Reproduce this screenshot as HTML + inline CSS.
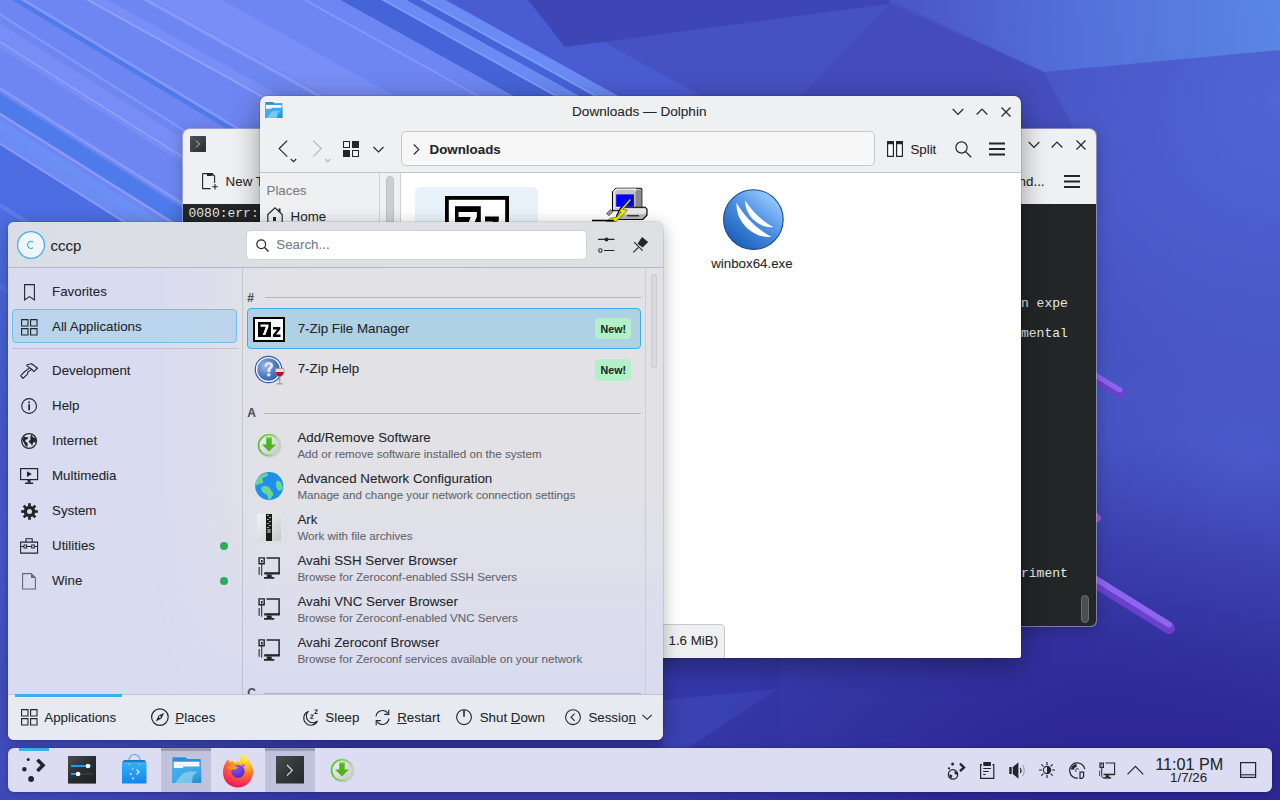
<!DOCTYPE html>
<html><head><meta charset="utf-8">
<style>
*{box-sizing:border-box;margin:0;padding:0}
html,body{width:1280px;height:800px;overflow:hidden}
body{position:relative;font-family:"Liberation Sans",sans-serif;color:#232629;font-size:13.33px;-webkit-text-stroke:0.08px currentColor;
background:#4a55c8;}
.abs{position:absolute}
#wall{position:absolute;left:0;top:0;width:1280px;height:800px;overflow:hidden;
background:
 linear-gradient(165deg,#7088f0 0%,#6a7eea 15%,#5464d8 35%,#4450c0 55%,#3a3cae 72%,#2e2696 100%);}
#streaks{position:absolute;left:0;top:0;width:1280px;height:800px;}
/* konsole */
#konsole{left:183px;top:129px;width:913px;height:497px;border-radius:7px 7px 5px 5px;background:#eff0f1;overflow:hidden;
 box-shadow:0 0 0 1px rgba(190,192,200,.55),0 4px 16px rgba(0,0,0,.25)}
#konsole .term{position:absolute;left:0;top:75px;width:913px;height:422px;background:#232627;}
.mono{font-family:"Liberation Mono",monospace;font-size:13px;color:#e8e8e8;white-space:pre;-webkit-text-stroke:0}
/* dolphin */
#dolphin{left:260px;top:96px;width:761px;height:562px;border-radius:7px 7px 3px 3px;background:#eff0f1;overflow:hidden;
 box-shadow:0 0 0 1px rgba(0,0,0,.10),0 6px 28px rgba(0,0,0,.38)}
/* kickoff */
#kick{left:8px;top:222px;width:655px;height:518px;border-radius:6px;overflow:hidden;background:#d9dcf0;
 box-shadow:0 0 0 1px rgba(0,0,0,.08),0 4px 18px rgba(0,0,0,.3)}
/* taskbar */
#panel{left:8px;top:748px;width:1264px;height:44px;border-radius:6px;background:rgba(220,221,243,1);
 box-shadow:0 0 0 1px rgba(0,0,0,.06),0 2px 8px rgba(0,0,0,.2)}
.t{position:absolute;white-space:nowrap;line-height:1}
svg{position:absolute;overflow:visible}
</style></head><body>
<div id="wall">
<svg id="streaks" width="1280" height="800" viewBox="0 0 1280 800"><defs><linearGradient id="wb" x1="0" y1="0" x2="0" y2="1"><stop offset="0" stop-color="#4650c4"/><stop offset=".45" stop-color="#3f47b8"/><stop offset=".8" stop-color="#3438a8"/><stop offset="1" stop-color="#3436a6"/></linearGradient><radialGradient id="bpr" cx="1150" cy="920" r="480" gradientUnits="userSpaceOnUse"><stop offset="0" stop-color="#2a2090" stop-opacity=".95"/><stop offset=".5" stop-color="#2c2392" stop-opacity=".7"/><stop offset="1" stop-color="#2c2490" stop-opacity="0"/></radialGradient><linearGradient id="mfg" x1="0" y1="0" x2="0" y2="800" gradientUnits="userSpaceOnUse"><stop offset="0" stop-color="#fff"/><stop offset=".3" stop-color="#fff"/><stop offset=".6" stop-color="#000"/></linearGradient><mask id="mfade" maskUnits="userSpaceOnUse" x="0" y="0" width="1280" height="800"><rect width="1280" height="800" fill="url(#mfg)"/></mask><clipPath id="lclip"><rect x="0" y="0" width="1000" height="800"/></clipPath><linearGradient id="brg" x1="900" y1="40" x2="1280" y2="0" gradientUnits="userSpaceOnUse"><stop offset="0" stop-color="#4a56c6"/><stop offset=".45" stop-color="#5370d8"/><stop offset="1" stop-color="#5a86e6"/></linearGradient><radialGradient id="lsp" cx="1240" cy="470" r="260" gradientUnits="userSpaceOnUse"><stop offset="0" stop-color="#4c5ccc" stop-opacity=".9"/><stop offset="1" stop-color="#4c5ccc" stop-opacity="0"/></radialGradient><linearGradient id="rg" x1="0" y1="60" x2="0" y2="800" gradientUnits="userSpaceOnUse"><stop offset="0" stop-color="#4752c2"/><stop offset=".2" stop-color="#4854c4"/><stop offset=".45" stop-color="#4250bc"/><stop offset=".7" stop-color="#3a40ae"/><stop offset="1" stop-color="#3436a6"/></linearGradient><radialGradient id="trl" cx="1280" cy="100" r="300" gradientUnits="userSpaceOnUse"><stop offset="0" stop-color="#5068d6" stop-opacity=".9"/><stop offset="1" stop-color="#5068d6" stop-opacity="0"/></radialGradient><radialGradient id="llt" cx="0" cy="520" r="420" gradientUnits="userSpaceOnUse"><stop offset="0" stop-color="#4a5cd0" stop-opacity="1"/><stop offset=".6" stop-color="#4656c8" stop-opacity=".7"/><stop offset="1" stop-color="#4452c4" stop-opacity="0"/></radialGradient><filter id="fb2"><feGaussianBlur stdDeviation="18"/></filter><filter id="sb"><feGaussianBlur stdDeviation="0.6"/></filter></defs><rect width="1280" height="800" fill="url(#wb)"/><rect x="0" y="0" width="700" height="800" fill="url(#llt)"/><g clip-path="url(#lclip)"><g mask="url(#mfade)"><polygon points="-1518.0,-10.0 323.0,-10.0 1818.5,820.0 -22.5,820.0" fill="#6e86f2" opacity="1.0"/><polygon points="323.0,-10.0 363.5,-10.0 1859.0,820.0 1818.5,820.0" fill="#4564d8" opacity="1.0"/><polygon points="363.5,-10.0 389.0,-10.0 1884.5,820.0 1859.0,820.0" fill="#6a8af4" opacity="1.0"/><polygon points="363.5,-10.0 367.0,-10.0 1862.5,820.0 1859.0,820.0" fill="#86a0fa" opacity="0.8"/><polygon points="389.0,-10.0 403.0,-10.0 1898.5,820.0 1884.5,820.0" fill="#4564d8" opacity="1.0"/><polygon points="403.0,-10.0 428.0,-10.0 1923.5,820.0 1898.5,820.0" fill="#6a8af4" opacity="1.0"/><polygon points="403.0,-10.0 406.5,-10.0 1902.0,820.0 1898.5,820.0" fill="#86a0fa" opacity="0.8"/><polygon points="428.0,-10.0 522.0,-10.0 2017.5,820.0 1923.5,820.0" fill="#4a5cd2" opacity="1.0"/><polygon points="285.0,-10.0 289.0,-10.0 1784.5,820.0 1780.5,820.0" fill="#a0b0ff" opacity="0.45"/><polygon points="134.0,-10.0 204.0,-10.0 1699.5,820.0 1629.5,820.0" fill="#8898fa" opacity="0.45"/><polygon points="125.0,-10.0 132.0,-10.0 1627.5,820.0 1620.5,820.0" fill="#a8b4ff" opacity="0.45"/><polygon points="68.0,-10.0 90.0,-10.0 1585.5,820.0 1563.5,820.0" fill="#8898fa" opacity="0.45"/><polygon points="68.0,-10.0 72.0,-10.0 1567.5,820.0 1563.5,820.0" fill="#a8b4ff" opacity="0.5"/><polygon points="-4.7,-10.0 4.3,-10.0 1387.7,820.0 1378.7,820.0" fill="#4a7ae8" opacity="0.9"/><polygon points="4.3,-10.0 9.3,-10.0 1392.7,820.0 1387.7,820.0" fill="#a0b0ff" opacity="0.45"/><polygon points="-40.9,-10.0 -36.9,-10.0 1280.6,820.0 1276.6,820.0" fill="#a8b4ff" opacity="0.4"/><polygon points="-91.9,-10.0 -52.9,-10.0 1264.6,820.0 1225.6,820.0" fill="#8898fa" opacity="0.4"/><polygon points="-83.9,-10.0 -80.9,-10.0 1236.6,820.0 1233.6,820.0" fill="#b0bcff" opacity="0.45"/><polygon points="-158.9,-10.0 -153.9,-10.0 1163.6,820.0 1158.6,820.0" fill="#a8b4ff" opacity="0.45"/><polygon points="-193.9,-10.0 -163.9,-10.0 1153.6,820.0 1123.6,820.0" fill="#4a7ae8" opacity="0.9"/><polygon points="-198.9,-10.0 -194.9,-10.0 1122.6,820.0 1118.6,820.0" fill="#a8b4ff" opacity="0.5"/><polygon points="-222.9,-10.0 -205.9,-10.0 1111.6,820.0 1094.6,820.0" fill="#6a90f4" opacity="0.9"/><polygon points="-241.9,-10.0 -222.9,-10.0 1094.6,820.0 1075.6,820.0" fill="#6a90f4" opacity="0.6"/><polygon points="-245.9,-10.0 -241.9,-10.0 1075.6,820.0 1071.6,820.0" fill="#a8b4ff" opacity="0.45"/><polygon points="-1515.9,-10.0 -245.9,-10.0 1071.6,820.0 -198.4,820.0" fill="#4c6ee2" opacity="1"/><polygon points="-345.9,-10.0 -337.9,-10.0 979.6,820.0 971.6,820.0" fill="#6a8af4" opacity="0.5"/><polygon points="-475.9,-10.0 -465.9,-10.0 851.6,820.0 841.6,820.0" fill="#6a8af4" opacity="0.4"/></g></g><polygon points="528,0 1280,0 1280,800 780,800 780,140" fill="url(#rg)"/><rect x="780" y="0" width="500" height="450" fill="url(#trl)"/><polygon points="528,0 889,0 889,4 565,47" fill="#3e46b6"/><polygon points="889,4 760,140 1080,140 1044,72" fill="#4248b6" opacity=".6"/><polygon points="889,0 1280,0 1280,50 1044,72" fill="url(#brg)"/><polygon points="663,700 778,689 688,748 663,748" fill="#3c44b4" opacity=".8"/><rect x="0" y="0" width="1280" height="800" fill="url(#lsp)"/><rect x="0" y="0" width="1280" height="800" fill="url(#bpr)"/><g stroke-linecap="round"><path d="M1060 357 L1120 393" stroke="#6a40cc" stroke-width="10"/><path d="M1060 354 L1120 390" stroke="#8c64ee" stroke-width="5"/><path d="M1060 560 L1169 628" stroke="#6a40cc" stroke-width="12"/><path d="M1060 556.5 L1169 624.5" stroke="#8d66f0" stroke-width="6"/><path d="M1090 513 L1097 518" stroke="#8a5ae0" stroke-width="8"/></g></svg>
</div>

<div id="konsole" class="abs">
 <svg style="left:7px;top:7px" width="16" height="16" viewBox="0 0 16 16"><defs><linearGradient id="kg" x1="0" y1="0" x2="1" y2="1"><stop offset="0" stop-color="#4d5356"/><stop offset="1" stop-color="#2a2e30"/></linearGradient></defs><rect width="16" height="16" rx="1" fill="url(#kg)"/><path d="M6 4.5l3.5 3.5-3.5 3.5" fill="none" stroke="#d6d8da" stroke-width="0.9"/></svg>
 <svg style="left:844.5px;top:12px" width="12" height="8" viewBox="0 0 12 8"><path d="M0.7 1l5.3 5.3 5.3-5.3" fill="none" stroke="#232629" stroke-width="1.2"/></svg>
 <svg style="left:868px;top:12px" width="12" height="8" viewBox="0 0 12 8"><path d="M0.7 6.5l5.3-5.3 5.3 5.3" fill="none" stroke="#232629" stroke-width="1.2"/></svg>
 <svg style="left:893px;top:10.5px" width="10" height="10" viewBox="0 0 10 10"><path d="M0.5 0.5l9 9M9.5 0.5l-9 9" fill="none" stroke="#232629" stroke-width="1.2"/></svg>
 <svg style="left:19px;top:44px" width="17" height="17" viewBox="0 0 17 17"><path d="M0.6 0.6h9.5l2.5 2.5v7M0.6 0.6v15h8" fill="none" stroke="#232629" stroke-width="1.1"/><rect x="5" y="0" width="5.5" height="3" fill="#232629"/><path d="M13 11v5.5M10.2 13.8h5.6" stroke="#232629" stroke-width="1.1"/></svg>
 <div class="t" style="left:42.6px;top:45.7px">New Tab</div>
 <div class="t" style="left:824.5px;top:45.7px">Find...</div>
 <svg style="left:880.5px;top:46px" width="16" height="13" viewBox="0 0 16 13"><path d="M0 1h16M0 6.5h16M0 12h16" stroke="#232629" stroke-width="1.9"/></svg>
 <div class="term">
  <div class="t mono" style="left:5.5px;top:3px">0080:err:</div>
  <div class="t mono" style="left:799px;top:92.8px">option expe</div>
  <div class="t mono" style="left:799px;top:122.7px">xperimental</div>
  <div class="t mono" style="left:806.8px;top:362.5px">experiment</div>
  <div class="abs" style="left:897.8px;top:390.9px;width:8.4px;height:28px;border-radius:4.2px;background:#4b4e51;border:1px solid #6b6e71"></div>
 </div>
</div>
<div id="dolphin" class="abs">
 <div class="t" style="left:312px;top:8.5px;font-size:13.6px">Downloads — Dolphin</div>
 <svg style="left:5px;top:6.3px" width="18" height="16.5" viewBox="0 0 30 27" preserveAspectRatio="none"><defs><linearGradient id="dfg2" x1="0" y1="0" x2="1" y2="1"><stop offset="0" stop-color="#48b4ec"/><stop offset=".6" stop-color="#3aa6e4"/><stop offset="1" stop-color="#2a86c8"/></linearGradient></defs><path d="M.5 .2h13l1.8 1.8h13.4v24h-28.2z" fill="#2b90d6"/><rect x="1.7" y="4.7" width="25.8" height="6.5" fill="#f6f6f6"/><path d="M0 11.4h10.6l.8-2h17.9v16.7h-29.3z" fill="url(#dfg2)"/><path d="M3.5 26.1C7 19.5 11 15.5 17 14.5c3-.5 6 0 8.3.2-1 1.5-2.8 2.5-4.2 3.6-.6 2.6-1.2 5.2-1 7.8z" fill="#8fd2f0" opacity=".75"/></svg>
 <svg style="left:692px;top:12px" width="12" height="8" viewBox="0 0 12 8"><path d="M0.7 1l5.3 5.3 5.3-5.3" fill="none" stroke="#232629" stroke-width="1.2"/></svg>
 <svg style="left:716px;top:12px" width="12" height="8" viewBox="0 0 12 8"><path d="M0.7 6.5l5.3-5.3 5.3 5.3" fill="none" stroke="#232629" stroke-width="1.2"/></svg>
 <svg style="left:741px;top:10.5px" width="10" height="10" viewBox="0 0 10 10"><path d="M0.5 0.5l9 9M9.5 0.5l-9 9" fill="none" stroke="#232629" stroke-width="1.2"/></svg>
 <!-- toolbar -->
 <svg style="left:18px;top:44px" width="20" height="24" viewBox="0 0 20 24"><path d="M9.2 0.6l-8 8 8 8" fill="none" stroke="#232629" stroke-width="1.2"/><path d="M12.8 19l2.7 2.7 2.7-2.7" fill="none" stroke="#232629" stroke-width="1.1"/></svg>
 <svg style="left:52px;top:44px" width="20" height="24" viewBox="0 0 20 24"><path d="M1.2 0.6l8 8-8 8" fill="none" stroke="#b4b6b8" stroke-width="1.2"/><path d="M13 19l2.7 2.7 2.7-2.7" fill="none" stroke="#b4b6b8" stroke-width="1.1"/></svg>
 <svg style="left:83px;top:45px" width="16" height="16" viewBox="0 0 16 16"><rect x="0.5" y="0.5" width="6" height="6" fill="none" stroke="#232629"/><rect x="9" y="0" width="7" height="7" fill="#232629"/><rect x="0" y="9" width="7" height="7" fill="#232629"/><rect x="9.5" y="9.5" width="6" height="6" fill="none" stroke="#232629"/></svg>
 <svg style="left:113px;top:50px" width="11" height="7" viewBox="0 0 11 7"><path d="M0.5 1l5 5 5-5" fill="none" stroke="#232629" stroke-width="1.1"/></svg>
 <div class="abs" style="left:141px;top:35px;width:474px;height:35px;border-radius:5px;background:#f7f7f8;border:1px solid #c8c9cc"></div>
 <svg style="left:153px;top:48px" width="7" height="11" viewBox="0 0 7 11"><path d="M0.8 0.5l5 5-5 5" fill="none" stroke="#232629" stroke-width="1.1"/></svg>
 <div class="t" style="left:169.6px;top:46.7px;font-weight:bold">Downloads</div>
 <svg style="left:627px;top:45px" width="16" height="16" viewBox="0 0 16 16"><path d="M0 0h7v16h-7zM9 0h7v16h-7z" fill="#232629"/><path d="M1.2 3.2h4.6v11.6h-4.6zM10.2 3.2h4.6v11.6h-4.6z" fill="#fff"/></svg>
 <div class="t" style="left:650.4px;top:46.7px">Split</div>
 <svg style="left:695px;top:45px" width="17" height="17" viewBox="0 0 17 17"><circle cx="6.5" cy="6.5" r="5.6" fill="none" stroke="#232629" stroke-width="1.2"/><path d="M10.6 10.6l5.6 5.6" stroke="#232629" stroke-width="1.3"/></svg>
 <svg style="left:729px;top:46px" width="16" height="14" viewBox="0 0 16 14"><path d="M0 1.5h16M0 7h16M0 12.5h16" stroke="#232629" stroke-width="1.9"/></svg>
 <div class="abs" style="left:0;top:76px;width:761px;height:1px;background:#c4c5c8"></div>
 <!-- sidebar -->
 <div class="abs" style="left:119px;top:77px;width:1px;height:490px;background:#cfd0d2"></div>
 <div class="abs" style="left:126px;top:79.5px;width:8px;height:200px;border-radius:4px;background:#cdcecf;border:1px solid #bfc0c2"></div>
 <div class="t" style="left:6.5px;top:87.7px;color:#7b7c7e">Places</div>
 <svg style="left:7px;top:111px" width="16" height="16" viewBox="0 0 16 16"><path d="M0.8 7.5L8 0.8l7.2 6.7v8.2h-14.4z" fill="none" stroke="#232629" stroke-width="1.2"/><rect x="6" y="10" width="3" height="4" fill="#232629"/><rect x="11.5" y="1.5" width="2" height="3.5" fill="#232629"/></svg>
 <div class="t" style="left:30.6px;top:113.7px">Home</div>
 <!-- content -->
 <div class="abs" style="left:140px;top:77px;width:621px;height:485px;background:#fff;border-left:1px solid #d0d1d3"></div>
 <div class="abs" style="left:155px;top:91px;width:123px;height:150px;border-radius:5px;background:#e9f2fa"></div>
 <svg style="left:185px;top:99.6px" width="64" height="50" viewBox="0 0 64 50"><rect x="1.9" y="1.9" width="60.2" height="48" fill="#fff" stroke="#000" stroke-width="3.8"/><rect x="10" y="10.2" width="25.8" height="40" fill="#000"/><path d="M13.5 16h18.4v4.5l-7 18h-6l6.8-17.5h-12.2z" fill="#fff"/><path d="M40 20.4h13.8v4.6l-8 9.5h8.2v5h-14v-4.6l8-9.5h-8z" fill="#000"/></svg>
 <svg style="left:343px;top:91px" width="46" height="34" viewBox="0 0 46 34"><path d="M9.5 5L13 1.2h25l.8 1v21.5h-29.3z" fill="#c4c4c4" stroke="#000" stroke-width="1.1"/><path d="M32.5 3h6v20.5h-6z" fill="#8a8a8a"/><path d="M11 22V4.5l2.5-2.3h19v2" fill="none" stroke="#f4f4f4" stroke-width="1.3"/><rect x="13.2" y="7.4" width="17.7" height="12.3" fill="#0000f4"/><path d="M12.5 20.5h19.5" stroke="#f0f0f0" stroke-width="1.2"/><path d="M18 20.3h24.2l1.8 1.9v6l-4.2 4.3h-26v-4.3z" fill="#b8b8b8" stroke="#000" stroke-width="1.1"/><path d="M18.5 21.5h24.5v3.8l-2 2h-23z" fill="#e8e8e8"/><path d="M24 28.8h12" stroke="#3a3a3a" stroke-width="1.6"/><path d="M27 11.8l1.2 1.1-8.2 9.5 4.4.8-11.2 11.3h-10l4-3.3 6.5-1.2 4.5-4.8-2.3-.6z" fill="#f4ee00" stroke="#1a1a1a" stroke-width=".5"/><path d="M3.5 26.5l4-4 2.5 2.2-4 4z" fill="#9a9a9a" stroke="#222" stroke-width=".6"/><path d="M-11 33.5h22" stroke="#000" stroke-width="1.4"/></svg>
 <svg style="left:458px;top:88px" width="70" height="70" viewBox="0 0 70 70"><defs><linearGradient id="wbg" x1=".8" y1=".15" x2=".2" y2=".9"><stop offset="0" stop-color="#8ec4ff"/><stop offset=".45" stop-color="#4c8ee0"/><stop offset="1" stop-color="#1c62bc"/></linearGradient></defs><circle cx="35.4" cy="35.6" r="29.8" fill="url(#wbg)" stroke="#1a4a8e" stroke-width="1.1"/><path d="M18.4 18.8A33 33 0 0 0 53.4 52.9 90 90 0 0 1 18.4 18.8z" fill="#fff"/><path d="M27.1 16.2A27 27 0 0 0 55.5 43.3 80 80 0 0 1 27.1 16.2z" fill="#fff"/></svg>
 <div class="t" style="left:451.2px;top:160.7px">winbox64.exe</div>
 <div class="abs" style="left:141px;top:528.4px;width:324px;height:40px;border-radius:4px;background:#eff0f1;border:1px solid #c8c9cb"></div>
 <div class="t" style="left:408.5px;top:538.3px">1.6 MiB)</div>
</div>
<div id="kick" class="abs">
<div class="abs" style="left:0;top:0;width:655px;height:45px;background:linear-gradient(to right,#dbdde6 0%,#dddee4 40%,#dfe0e3 100%)"></div>
<div class="abs" style="left:150px;top:46px;width:505px;height:426px;background:linear-gradient(to bottom,#e1e1e6 0%,#e1e1e6 52%,rgba(225,225,230,0) 100%);-webkit-mask-image:linear-gradient(to right,transparent 0,#000 110px)"></div>
<div class="abs" style="left:0;top:45px;width:655px;height:1px;background:rgba(150,152,160,.55)"></div>
<svg style="left:9px;top:9px" width="28" height="28" viewBox="0 0 28 28"><circle cx="14" cy="14" r="13.4" fill="#eff6fa" stroke="#3daee9" stroke-width="1.2"/><path d="M16.2 11.2a3.3 3.6 0 1 0 0 5.4" fill="none" stroke="#3daee9" stroke-width="1.1"/></svg>
<div class="t" style="left:42.6px;top:16.05px;font-size:15px;">cccp</div>
<div class="abs" style="left:238.9px;top:8.75px;width:339px;height:28.4px;border-radius:4px;background:#fff;box-shadow:0 0 0 1px rgba(0,0,0,.06)"></div>
<svg style="left:247.5px;top:17px" width="13" height="13" viewBox="0 0 13 13"><circle cx="5.2" cy="5.2" r="4.4" fill="none" stroke="#232629" stroke-width="1.2"/><path d="M8.3 8.3l4.2 4.2" stroke="#232629" stroke-width="1.3"/></svg>
<div class="t" style="left:268.25px;top:16.46px;font-size:13.33px;color:#707d8a">Search...</div>
<svg style="left:590px;top:15px" width="17" height="16" viewBox="0 0 17 16"><path d="M0 2.4h16.5M6 13.5h10.5" stroke="#232629" stroke-width="1.1"/><circle cx="8.5" cy="2.4" r="2" fill="#232629"/><circle cx="2.4" cy="13.5" r="1.7" fill="#fff" stroke="#232629" stroke-width="1.1"/></svg>
<svg style="left:625px;top:15px" width="16" height="16" viewBox="0 0 16 16"><path d="M9 0l6.2 5-5.6 5.6-5-3.9z" fill="#232629"/><path d="M1.2 5.2l8.4 8.4" stroke="#232629" stroke-width="1.1"/><path d="M.3 15.3l5-4.8" stroke="#232629" stroke-width="1.1"/></svg>
<div class="abs" style="left:234px;top:46px;width:1px;height:426px;background:rgba(150,152,165,.35)"></div>
<div class="abs" style="left:637px;top:46px;width:1px;height:426px;background:rgba(150,152,165,.25)"></div>
<div class="abs" style="left:643px;top:52px;width:6px;height:94px;border-radius:3px;background:rgba(215,216,220,.8);border:1px solid rgba(170,172,178,.3)"></div>
<div class="abs" style="left:4.2px;top:87.2px;width:225.3px;height:34.1px;border-radius:4px;background:rgba(176,210,236,.75);border:1px solid #72c0ea"></div>
<div class="abs" style="left:4px;top:126px;width:226px;height:1px;background:rgba(150,152,165,.4)"></div>
<div class="t" style="left:44px;top:62.61px;font-size:13.33px;">Favorites</div>
<div class="t" style="left:44px;top:97.61px;font-size:13.33px;">All Applications</div>
<div class="t" style="left:44px;top:142.11px;font-size:13.33px;">Development</div>
<div class="t" style="left:44px;top:177.11px;font-size:13.33px;">Help</div>
<div class="t" style="left:44px;top:212.11px;font-size:13.33px;">Internet</div>
<div class="t" style="left:44px;top:247.11px;font-size:13.33px;">Multimedia</div>
<div class="t" style="left:44px;top:282.11px;font-size:13.33px;">System</div>
<div class="t" style="left:44px;top:317.11px;font-size:13.33px;">Utilities</div>
<div class="t" style="left:44px;top:352.11px;font-size:13.33px;">Wine</div>
<svg style="left:15.5px;top:62px" width="12" height="17" viewBox="0 0 12 17"><path d="M0.6 0.6h9.8v15.4l-4.9-3.4-4.9 3.4z" fill="none" stroke="#232629" stroke-width="1.1"/></svg>
<svg style="left:12.5px;top:96.5px" width="17" height="17" viewBox="0 0 17 17"><path d="M0.6 0.6h6.4v6.4h-6.4zM9.6 0.6h6.4v6.4h-6.4zM0.6 9.6h6.4v6.4h-6.4zM9.6 9.6h6.4v6.4h-6.4z" fill="none" stroke="#232629" stroke-width="1.1"/></svg>
<svg style="left:12px;top:140.5px" width="19" height="17" viewBox="0 0 19 17"><path d="M7.2 1.8L11.6 0.7 17.6 5.25 13.7 8.7 11.9 6.2 6.7 2.65z" fill="none" stroke="#232629" stroke-width="1.1" stroke-linejoin="round"/><path d="M9.65 4.9L4.8 8.5 0.7 12.6 2.9 15.4 7.5 11.1 7.7 9.15 11.9 6.2" fill="none" stroke="#232629" stroke-width="1.1" stroke-linejoin="round"/></svg>
<svg style="left:12.9px;top:175.75px" width="17" height="17" viewBox="0 0 17 17"><circle cx="8.1" cy="8" r="7.4" fill="none" stroke="#232629" stroke-width="1.1"/><rect x="7.3" y="6.2" width="1.7" height="6" fill="#232629"/><rect x="7.3" y="3.5" width="1.7" height="1.7" fill="#232629"/></svg>
<svg style="left:12.9px;top:211px" width="17" height="17" viewBox="0 0 17 17"><circle cx="8.1" cy="8" r="7.4" fill="none" stroke="#232629" stroke-width="1.3"/><path d="M3 3.5c1.5 0.3 2.3 1 3.5 0.8 1-0.2 1 1.2 0.2 1.6-1 0.5-2.2 0.2-2.5 1.5-0.3 1.2 1.5 1.5 2.3 2.6 0.6 0.9 0.2 2.8-0.5 3.9-1.2-0.6-1.8-2-2.6-3.2C2.5 9.5 1.8 8 1.5 6.8z" fill="#232629"/><path d="M10.5 1.5c1 1 0.5 2 1.5 2.7s2.3 0.3 2.8 1.5c0.5 1.3-0.3 2.6 0.2 3.8-1 0.3-2-0.6-2.8 0.2-0.8 0.9-0.3 2.2-1 3.3-0.6-0.8-0.8-2-1.6-2.6-0.6-0.5-1.6-0.3-1.8-1.3-0.2-1 0.8-1.6 1.5-2C10 6.5 9 5.5 9.3 4.3 9.5 3.3 10 2.4 10.5 1.5z" fill="#232629"/></svg>
<svg style="left:12px;top:245.5px" width="19" height="17" viewBox="0 0 19 17"><rect x="0.6" y="0.6" width="17" height="11" fill="none" stroke="#232629" stroke-width="1.2"/><path d="M7 3.2v5.8l4.8-2.9z" fill="#232629"/><rect x="7.6" y="11.6" width="3" height="3" fill="#232629"/><rect x="5" y="14.5" width="8.2" height="1.5" fill="#232629"/></svg>
<svg style="left:12.5px;top:280.5px" width="17" height="17" viewBox="0 0 17 17"><defs><mask id="gm"><rect width="17" height="17" fill="#fff"/><circle cx="8.5" cy="8.5" r="2.5" fill="#000"/></mask></defs><g mask="url(#gm)"><circle cx="8.5" cy="8.5" r="5.8" fill="#232629"/><rect x="7.15" y="0.1999999999999993" width="2.7" height="4" transform="rotate(0 8.5 8.5)" fill="#232629"/><rect x="7.15" y="0.1999999999999993" width="2.7" height="4" transform="rotate(45 8.5 8.5)" fill="#232629"/><rect x="7.15" y="0.1999999999999993" width="2.7" height="4" transform="rotate(90 8.5 8.5)" fill="#232629"/><rect x="7.15" y="0.1999999999999993" width="2.7" height="4" transform="rotate(135 8.5 8.5)" fill="#232629"/><rect x="7.15" y="0.1999999999999993" width="2.7" height="4" transform="rotate(180 8.5 8.5)" fill="#232629"/><rect x="7.15" y="0.1999999999999993" width="2.7" height="4" transform="rotate(225 8.5 8.5)" fill="#232629"/><rect x="7.15" y="0.1999999999999993" width="2.7" height="4" transform="rotate(270 8.5 8.5)" fill="#232629"/><rect x="7.15" y="0.1999999999999993" width="2.7" height="4" transform="rotate(315 8.5 8.5)" fill="#232629"/></g></svg>
<svg style="left:12px;top:315.5px" width="19" height="16" viewBox="0 0 19 16"><path d="M0.6 4.1h17v11h-17zM6 4V0.8h6.2V4" fill="none" stroke="#232629" stroke-width="1.1"/><path d="M0.6 8.5h17" stroke="#232629" stroke-width="1.1"/><rect x="4" y="7" width="2.6" height="3" fill="#dfe1f2" stroke="#232629" stroke-width="1"/><rect x="11.7" y="7" width="2.6" height="3" fill="#dfe1f2" stroke="#232629" stroke-width="1"/></svg>
<svg style="left:14px;top:351px" width="15" height="17" viewBox="0 0 15 17"><path d="M0.6 0.6h8.6l4.2 4.2v11.2h-12.8z" fill="none" stroke="#5f6a75" stroke-width="1.1"/><path d="M9 0.6v4.4h4.4" fill="#5f6a75"/></svg>
<div class="abs" style="left:212px;top:319.8px;width:8px;height:8px;border-radius:4px;background:#27ae60"></div>
<div class="abs" style="left:212px;top:354.9px;width:8px;height:8px;border-radius:4px;background:#27ae60"></div>
<div class="t" style="left:239.2px;top:69.54px;font-size:12px;font-weight:bold;color:#4d4f55">#</div>
<div class="abs" style="left:257px;top:75px;width:376px;height:1px;background:rgba(140,142,150,.5)"></div>
<div class="abs" style="left:239.2px;top:86.2px;width:393.8px;height:40.6px;border-radius:4px;background:rgba(170,207,228,.92);border:1px solid #3daee9"></div>
<svg style="left:245px;top:94.8px" width="32" height="25" viewBox="0 0 32 25"><rect x="1" y="1" width="30" height="23" fill="#fff" stroke="#000" stroke-width="2"/><rect x="5" y="5" width="13" height="15" fill="#000"/><path d="M7.5 7.5h8v2.2l-3.2 8.3h-2.6l3.1-8.2h-5.3z" fill="#fff"/><path d="M20 10h7.3v2.2l-4.3 5.3h4.5v2.5h-7.6v-2.2l4.3-5.3h-4.2z" fill="#000"/></svg>
<div class="t" style="left:289.7px;top:99.51px;font-size:13.33px;">7-Zip File Manager</div>
<div class="abs" style="left:587px;top:96.3px;width:35.7px;height:21.2px;border-radius:4px;background:#b2f0c8"></div><div class="t" style="left:592.5px;top:101.6px;font-size:10.7px;font-weight:bold;color:#1c2a22">New!</div>
<svg style="left:245.5px;top:132.5px" width="32" height="32" viewBox="0 0 32 32"><defs><radialGradient id="hg" cx=".35" cy=".35" r=".8"><stop offset="0" stop-color="#9cb8e0"/><stop offset=".6" stop-color="#4a78c0"/><stop offset="1" stop-color="#2c5aa6"/></radialGradient></defs><circle cx="14.5" cy="14.5" r="13.8" fill="#2a5aa8"/><circle cx="14.5" cy="14.5" r="12.6" fill="#fff"/><circle cx="14.5" cy="14.5" r="11.2" fill="url(#hg)"/><path d="M10.5 11.5c0-3 2-4.5 4.3-4.5 2.6 0 4.3 1.6 4.3 3.8 0 2.5-2.8 3-2.8 5.3v0.8h-3v-1.2c0-3 2.6-3.3 2.6-4.9 0-0.9-0.6-1.5-1.2-1.5-0.8 0-1.3 0.7-1.3 2.2z" fill="#e8e8e8"/><rect x="13.3" y="18.3" width="3" height="3" fill="#e8e8e8"/><path d="M21.5 13.5h8.4c0.5 3 0.5 7-4.2 8.2-4.7-1.2-4.7-5.2-4.2-8.2z" fill="#e0e0e0" stroke="#888" stroke-width=".6"/><path d="M21.6 17h8.2c-0.3 2.5-1.6 4-4.1 4.6-2.5-0.6-3.8-2.1-4.1-4.6z" fill="#c0101e"/><path d="M25.7 21.8v6M22.8 29.2c1-0.9 4.8-0.9 5.8 0" stroke="#999" stroke-width="1.2" fill="none"/></svg>
<div class="t" style="left:289.7px;top:140.41px;font-size:13.33px;">7-Zip Help</div>
<div class="abs" style="left:587px;top:137.4px;width:35.7px;height:21.2px;border-radius:4px;background:#b2f0c8"></div><div class="t" style="left:592.5px;top:142.7px;font-size:10.7px;font-weight:bold;color:#1c2a22">New!</div>
<div class="t" style="left:239.3px;top:185.34px;font-size:12px;font-weight:bold;color:#4d4f55">A</div>
<div class="abs" style="left:256px;top:191px;width:377px;height:1px;background:rgba(140,142,150,.5)"></div>
<div class="t" style="left:289.4px;top:208.71px;font-size:13.33px;">Add/Remove Software</div>
<div class="t" style="left:289.4px;top:225.98px;font-size:11.6px;color:#616469">Add or remove software installed on the system</div>
<div class="t" style="left:289.4px;top:249.71px;font-size:13.33px;">Advanced Network Configuration</div>
<div class="t" style="left:289.4px;top:266.98px;font-size:11.6px;color:#616469">Manage and change your network connection settings</div>
<div class="t" style="left:289.4px;top:290.71px;font-size:13.33px;">Ark</div>
<div class="t" style="left:289.4px;top:307.98px;font-size:11.6px;color:#616469">Work with file archives</div>
<div class="t" style="left:289.4px;top:331.71px;font-size:13.33px;">Avahi SSH Server Browser</div>
<div class="t" style="left:289.4px;top:348.98px;font-size:11.6px;color:#616469">Browse for Zeroconf-enabled SSH Servers</div>
<div class="t" style="left:289.4px;top:372.71px;font-size:13.33px;">Avahi VNC Server Browser</div>
<div class="t" style="left:289.4px;top:389.98px;font-size:11.6px;color:#616469">Browse for Zeroconf-enabled VNC Servers</div>
<div class="t" style="left:289.4px;top:413.71px;font-size:13.33px;">Avahi Zeroconf Browser</div>
<div class="t" style="left:289.4px;top:430.98px;font-size:11.6px;color:#616469">Browse for Zeroconf services available on your network</div>
<svg style="left:249px;top:210.8px" width="25" height="25" viewBox="0 0 25 25"><defs><linearGradient id="gdf" x1="0" y1="0" x2="1" y2="1"><stop offset="0" stop-color="#f2f2f2"/><stop offset="1" stop-color="#c8c8cc"/></linearGradient><linearGradient id="gdr" x1="0" y1="0" x2="1" y2=".3"><stop offset="0" stop-color="#4cc21e"/><stop offset=".6" stop-color="#7ad04a"/><stop offset="1" stop-color="#c8d0c0"/></linearGradient></defs><circle cx="12.5" cy="12.6" r="11.8" fill="#bdbdc2" opacity=".6"/><circle cx="12" cy="12.2" r="11" fill="url(#gdf)"/><circle cx="12" cy="12.2" r="10.4" fill="none" stroke="url(#gdr)" stroke-width="1.6"/><path d="M9.3 4.6h5.4v6.8h4.2l-6.9 7.1-6.9-7.1h4.2z" fill="#4ab51c"/><path d="M9.3 4.6h5.4v1.5h-5.4z" fill="#72cc44"/></svg>
<svg style="left:246.75px;top:249.8px" width="29" height="29" viewBox="0 0 29 29"><defs><clipPath id="glc"><circle cx="14.25" cy="14.1" r="14.1"/></clipPath></defs><circle cx="14.25" cy="14.1" r="14.1" fill="#1e90ea"/><g clip-path="url(#glc)" fill="#6ed492"><path d="M1 9c2-4 6-7 11-8 1.5 1.2.8 3-1 3.8-1.5.7-3.2.3-3.8 1.8-.5 1.3 1.5 2.2 1 3.6-.6 1.5-3 1.3-4.5 1.8-1.4.5-2.2 1.5-3.5 2.3z"/><path d="M7 14.5c2.3-1 5-.6 7 .8 1.8 1.3 1.8 3.8 3.5 4.9 1.4 1 .8 3-.3 4.1-1 1.2-1.2 3-2.6 3.9-1.8-1.6-1.8-4-3.2-5.6-1.5-1.6-4-1.6-4.8-3.8-.4-1.6-.4-3.4.4-4.3z"/><path d="M22.5 8.5c2.5.2 4.6 3 5.2 6 .4 2-.9 4-2.8 4.3-2 .2-2.9-2-3.5-3.8-.6-1.8-.8-5.1 1.1-6.5z"/></g></svg>
<svg style="left:249px;top:291.5px" width="24" height="28" viewBox="0 0 24 28"><defs><linearGradient id="ag" x1="0" y1="0" x2="1" y2="1"><stop offset="0" stop-color="#f4f4f4"/><stop offset="1" stop-color="#c8cacc"/></linearGradient></defs><rect x="0" y="0" width="24" height="27" fill="url(#ag)"/><rect x="9" y="0" width="6" height="27" fill="#1a1a1a"/><path d="M10 1.5h2M12 3.5h2M10 5.5h2M12 7.5h2M10 9.5h2M12 11.5h2M10 13.5h2" stroke="#aaa" stroke-width="1"/><rect x="10.3" y="15" width="3.4" height="4" fill="#888"/></svg>
<svg style="left:249.8px;top:335px" width="23" height="22" viewBox="0 0 23 22"><path d="M1.1 0.85h5.1v5.95h-5.1z" fill="none" stroke="#232629" stroke-width="1.4"/><path d="M3 2.9h1.6v2.6h-1.6z" fill="#232629"/><path d="M3.7 7.2v11.5" stroke="#232629" stroke-width="1"/><path d="M1.2 10v7.7" stroke="#56585c" stroke-width="1.5"/><path d="M8.45 0.9h12.65v15" fill="none" stroke="#232629" stroke-width="1.5"/><path d="M6.2 15.2h15.7v2.3h-15.7z" fill="#232629"/><path d="M8.8 17.4h4.9v2.8h-4.9z" fill="#232629"/><path d="M6 20.1h10.3v1.75h-10.3z" fill="#232629"/></svg>
<svg style="left:249.8px;top:376px" width="23" height="22" viewBox="0 0 23 22"><path d="M1.1 0.85h5.1v5.95h-5.1z" fill="none" stroke="#232629" stroke-width="1.4"/><path d="M3 2.9h1.6v2.6h-1.6z" fill="#232629"/><path d="M3.7 7.2v11.5" stroke="#232629" stroke-width="1"/><path d="M1.2 10v7.7" stroke="#56585c" stroke-width="1.5"/><path d="M8.45 0.9h12.65v15" fill="none" stroke="#232629" stroke-width="1.5"/><path d="M6.2 15.2h15.7v2.3h-15.7z" fill="#232629"/><path d="M8.8 17.4h4.9v2.8h-4.9z" fill="#232629"/><path d="M6 20.1h10.3v1.75h-10.3z" fill="#232629"/></svg>
<svg style="left:249.8px;top:417px" width="23" height="22" viewBox="0 0 23 22"><path d="M1.1 0.85h5.1v5.95h-5.1z" fill="none" stroke="#232629" stroke-width="1.4"/><path d="M3 2.9h1.6v2.6h-1.6z" fill="#232629"/><path d="M3.7 7.2v11.5" stroke="#232629" stroke-width="1"/><path d="M1.2 10v7.7" stroke="#56585c" stroke-width="1.5"/><path d="M8.45 0.9h12.65v15" fill="none" stroke="#232629" stroke-width="1.5"/><path d="M6.2 15.2h15.7v2.3h-15.7z" fill="#232629"/><path d="M8.8 17.4h4.9v2.8h-4.9z" fill="#232629"/><path d="M6 20.1h10.3v1.75h-10.3z" fill="#232629"/></svg>
<div class="t" style="left:239.3px;top:465.34px;font-size:12px;font-weight:bold;color:#4d4f55">C</div>
<div class="abs" style="left:256px;top:470.5px;width:377px;height:1px;background:rgba(140,142,150,.5)"></div>
<div class="abs" style="left:0;top:472px;width:655px;height:46px;background:rgba(233,234,240,.95)"></div>
<div class="abs" style="left:0;top:472px;width:655px;height:1px;background:rgba(150,152,160,.45)"></div>
<div class="abs" style="left:7px;top:472px;width:107px;height:3px;background:#3daee9"></div>
<svg style="left:12.5px;top:486.5px" width="17" height="17" viewBox="0 0 17 17"><path d="M0.6 0.6h6.4v6.4h-6.4zM9.6 0.6h6.4v6.4h-6.4zM0.6 9.6h6.4v6.4h-6.4zM9.6 9.6h6.4v6.4h-6.4z" fill="none" stroke="#232629" stroke-width="1.1"/></svg>
<div class="t" style="left:36.25px;top:489.1px;font-size:13.33px;">Applications</div>
<svg style="left:143px;top:485.8px" width="19" height="19" viewBox="0 0 19 19"><circle cx="8.9" cy="9.1" r="8.3" fill="none" stroke="#232629" stroke-width="1.2"/><path d="M13.2 4.8l-2.8 5.8-5.7 2.9 2.8-5.8z" fill="#232629"/><circle cx="8.9" cy="9.1" r="1" fill="#e9eaf0"/></svg>
<div class="t" style="left:167.3px;top:489.1px;font-size:13.33px;"><u>P</u>laces</div>
<svg style="left:293.9px;top:486.5px" width="17" height="17" viewBox="0 0 17 17"><path d="M6.5 2.2A7.2 7.2 0 1 0 15.5 12 5.8 5.8 0 0 1 6.5 2.2z" fill="none" stroke="#232629" stroke-width="1.1"/><path d="M8.5 6h3l-3 3.3h3M12.5 1h3.2l-3.2 3.5h3.2" fill="none" stroke="#232629" stroke-width="1"/></svg>
<div class="t" style="left:317.3px;top:489.1px;font-size:13.33px;">Sleep</div>
<svg style="left:365.9px;top:486.7px" width="17" height="17" viewBox="0 0 17 17"><path d="M2 7.3A6.6 6.6 0 0 1 14 4.5M15 9.7A6.6 6.6 0 0 1 3 12.5" fill="none" stroke="#232629" stroke-width="1.1"/><path d="M14.8 0.8v4.6h-4.6M2.2 16.2v-4.6h4.6" fill="none" stroke="#232629" stroke-width="1.1"/></svg>
<div class="t" style="left:389.2px;top:489.1px;font-size:13.33px;"><u>R</u>estart</div>
<svg style="left:448px;top:486.7px" width="17" height="17" viewBox="0 0 17 17"><circle cx="8" cy="8.2" r="7.4" fill="none" stroke="#232629" stroke-width="1.1"/><path d="M8 0.8v7" stroke="#232629" stroke-width="1.6"/></svg>
<div class="t" style="left:471.7px;top:489.1px;font-size:13.33px;">Shut <u>D</u>own</div>
<svg style="left:557px;top:486.7px" width="17" height="17" viewBox="0 0 17 17"><circle cx="8" cy="8.2" r="7.4" fill="none" stroke="#232629" stroke-width="1.1"/><path d="M9.6 4.6l-3.5 3.6 3.5 3.6" fill="none" stroke="#232629" stroke-width="1.1"/></svg>
<div class="t" style="left:580.4px;top:489.1px;font-size:13.33px;">Sessio<u>n</u></div>
<svg style="left:634.3px;top:492px" width="10" height="6" viewBox="0 0 10 6"><path d="M0.5 0.8l4.7 4.5 4.5-4.5" fill="none" stroke="#232629" stroke-width="1.1"/></svg>
</div>
<div id="panel" class="abs">
<div class="abs" style="left:11px;top:0;width:30px;height:3px;background:#3daee9"></div>
<svg style="left:12px;top:8px" width="28" height="28" viewBox="0 0 28 28"><circle cx="8.2" cy="3.6" r="1.5" fill="#232629"/><circle cx="4.4" cy="13.3" r="2.2" fill="#232629"/><circle cx="11.1" cy="23" r="2.9" fill="#232629"/><path d="M17.4 3.7L23 9.3 17.4 14.9" fill="none" stroke="#232629" stroke-width="3.5" stroke-linejoin="miter"/></svg>
<svg style="left:60px;top:8px" width="28" height="28" viewBox="0 0 28 28"><defs><linearGradient id="ssg" x1="0" y1="0" x2="1" y2="1"><stop offset="0" stop-color="#4a4e52"/><stop offset=".5" stop-color="#2a2d30"/><stop offset="1" stop-color="#1e2022"/></linearGradient></defs><rect x="0" y="0" width="28" height="27.6" fill="url(#ssg)"/><path d="M3 10h20" stroke="#1d99f3" stroke-width="2"/><path d="M20 10h5" stroke="#3a3d40" stroke-width="1.5"/><path d="M3 18h10" stroke="#1d99f3" stroke-width="2"/><path d="M10 18h15" stroke="#3a3d40" stroke-width="1.5"/><circle cx="20" cy="10" r="2.3" fill="#fff"/><circle cx="10" cy="18" r="2.3" fill="#fff"/></svg>
<svg style="left:114px;top:8px" width="25" height="28" viewBox="0 0 25 28"><defs><linearGradient id="dg" x1="0" y1="0" x2="0" y2="1"><stop offset="0" stop-color="#2fb2ff"/><stop offset="1" stop-color="#1684e8"/></linearGradient></defs><path d="M7 6V4a5.5 5.5 0 0 1 11 0v2" fill="none" stroke="#3daee9" stroke-width="1.1"/><path d="M0 6.5h24.5v21h-24.5z" fill="url(#dg)"/><path d="M0 6.5l2-2.5h20.5l2 2.5z" fill="#1a78c8"/><circle cx="7" cy="8.5" r=".8" fill="#aee0ff"/><circle cx="17.5" cy="8.5" r=".8" fill="#aee0ff"/><path d="M14.5 13.5l2.5 2.5-2.5 2.5" fill="none" stroke="#d8f0ff" stroke-width="1.3"/><circle cx="10.6" cy="13" r=".7" fill="#d8f0ff"/><circle cx="8.6" cy="18" r=".9" fill="#d8f0ff"/><circle cx="11" cy="22.5" r="1" fill="#d8f0ff"/></svg>
<div class="abs" style="left:153px;top:0;width:50px;height:44px;background:rgba(160,165,195,.45)"></div>
<div class="abs" style="left:153px;top:0;width:50px;height:3px;background:rgba(120,124,150,.55)"></div>
<svg style="left:163.5px;top:8.8px" width="30" height="27" viewBox="0 0 30 27"><defs><linearGradient id="dfg" x1="0" y1="0" x2="1" y2="1"><stop offset="0" stop-color="#48b4ec"/><stop offset=".6" stop-color="#3aa6e4"/><stop offset="1" stop-color="#2a86c8"/></linearGradient></defs><path d="M.5 .2h13l1.8 1.8h13.4v24h-28.2z" fill="#2b90d6"/><rect x="1.7" y="4.7" width="25.8" height="6.5" fill="#f6f6f6"/><path d="M0 11.4h10.6l.8-2h17.9v16.7h-29.3z" fill="url(#dfg)"/><path d="M3.5 26.1C7 19.5 11 15.5 17 14.5c3-.5 6 0 8.3.2-1 1.5-2.8 2.5-4.2 3.6-.6 2.6-1.2 5.2-1 7.8z" fill="#8fd2f0" opacity=".75"/><circle cx="13.8" cy="22.3" r=".6" fill="#3aa6e4"/></svg>
<svg style="left:210px;top:2px" width="40" height="40" viewBox="0 0 40 40"><defs><radialGradient id="ffo" cx="27" cy="6" r="34" gradientUnits="userSpaceOnUse"><stop offset="0" stop-color="#fff44f"/><stop offset=".3" stop-color="#ffc12a"/><stop offset=".55" stop-color="#ff6f2a"/><stop offset=".8" stop-color="#ff3553"/><stop offset="1" stop-color="#e0115f"/></radialGradient><radialGradient id="ffp" cx="18" cy="17" r="10" gradientUnits="userSpaceOnUse"><stop offset="0" stop-color="#8f5cff"/><stop offset="1" stop-color="#5a2fd0"/></radialGradient></defs><path d="M24.5 4C28.5 7 34.5 12 35 21 35.5 30 28.5 37.5 20 37.5 11.5 37.5 5 31 5 22.5 5 17.5 6.5 13.5 10.2 9.2L11.5 12.5 14.5 10.5 15.8 13.2C18 12 20 11.6 22.2 12 21.5 9.5 22.5 6.5 24.5 4Z" fill="url(#ffo)"/><circle cx="20" cy="21.3" r="6.6" fill="url(#ffp)"/><path d="M9.2 17.2C12 15.8 17 15.5 20.2 17.5 18.5 19.3 15 20.3 11.5 19.5z" fill="#ff9a2a"/><path d="M24 14c2 .5 3.2 1.5 3.5 3-1.2-.5-2.2-.6-3.2-.4z" fill="#b340e8"/></svg>
<div class="abs" style="left:257.2px;top:0;width:49.5px;height:44px;background:rgba(160,165,195,.45)"></div>
<div class="abs" style="left:257.2px;top:0;width:49.5px;height:3px;background:rgba(120,124,150,.55)"></div>
<svg style="left:268px;top:8.3px" width="28" height="28" viewBox="0 0 28 28"><defs><linearGradient id="kg2" x1="0" y1="0" x2="1" y2="1"><stop offset="0" stop-color="#474c4f"/><stop offset=".5" stop-color="#32373a"/><stop offset="1" stop-color="#25292b"/></linearGradient></defs><rect width="28" height="27.5" fill="url(#kg2)"/><path d="M11 9l5.3 5.3L11 19.6" fill="none" stroke="#e6e8ea" stroke-width="1.1"/></svg>
<svg style="left:321.5px;top:9.5px" width="25" height="25" viewBox="0 0 25 25"><defs><linearGradient id="gdf2" x1="0" y1="0" x2="1" y2="1"><stop offset="0" stop-color="#f2f2f2"/><stop offset="1" stop-color="#c8c8cc"/></linearGradient><linearGradient id="gdr2" x1="0" y1="0" x2="1" y2=".3"><stop offset="0" stop-color="#4cc21e"/><stop offset=".6" stop-color="#7ad04a"/><stop offset="1" stop-color="#c8d0c0"/></linearGradient></defs><circle cx="12.5" cy="12.6" r="11.8" fill="#bdbdc2" opacity=".6"/><circle cx="12" cy="12.2" r="11" fill="url(#gdf2)"/><circle cx="12" cy="12.2" r="10.4" fill="none" stroke="url(#gdr2)" stroke-width="1.6"/><path d="M9.3 4.6h5.4v6.8h4.2l-6.9 7.1-6.9-7.1h4.2z" fill="#4ab51c"/><path d="M9.3 4.6h5.4v1.5h-5.4z" fill="#72cc44"/></svg>
<svg style="left:939px;top:13.5px" width="19" height="19" viewBox="0 0 19 19"><circle cx="5.6" cy="1.9" r="1.5" fill="#232629"/><circle cx="2" cy="6.4" r="1.1" fill="#232629"/><path d="M13 1.6l4 3.8-4 3.8" fill="none" stroke="#232629" stroke-width="2.4"/><circle cx="6" cy="12.4" r="4.7" fill="none" stroke="#232629" stroke-width="1.2"/><path d="M7.6 9.2c1.6 0 2.8.9 3 2.5-.6.9-1.4 1.1-2.2.7-.7-.4-.4-1.1-1-1.6z" fill="#232629"/><path d="M2.2 12.6c1.1-.4 2.4 0 3 .9.3.9-.2 1.9-1 2.4-1.1-.3-1.8-1.7-2-3.3z" fill="#232629"/></svg>
<svg style="left:971.5px;top:14px" width="16" height="17" viewBox="0 0 16 17"><path d="M2 2.7h-1.4v13.7h13.2v-13.7h-1.4" fill="none" stroke="#232629" stroke-width="1.2"/><rect x="3.3" y="0" width="7.6" height="4" fill="#232629"/><path d="M3.2 6.5h7.8M3.2 9.5h5.5M3.2 12.5h2.5" stroke="#232629" stroke-width="1.1"/></svg>
<svg style="left:1000.5px;top:13.5px" width="17" height="17" viewBox="0 0 17 17"><path d="M0.3 5h2.4v7h-2.4z" fill="#232629"/><path d="M3.8 5l5.6-4.7v16.4L3.8 12z" fill="#232629"/><path d="M11.3 6c1 1.5 1 3.5 0 5" fill="none" stroke="#232629" stroke-width="1.1"/><path d="M13.5 3c2.2 3 2.2 8 0 11" fill="none" stroke="#8a8c90" stroke-width=".9"/></svg>
<svg style="left:1030.8px;top:14px" width="17" height="17" viewBox="0 0 17 17"><path d="M8 0v3M8 13v3M0 8h3M13 8h3M2.3 2.3l2.1 2.1M11.6 11.6l2.1 2.1M2.3 13.7l2.1-2.1M11.6 4.4l2.1-2.1" stroke="#232629" stroke-width="1.2"/><circle cx="8" cy="8" r="3.6" fill="none" stroke="#232629" stroke-width="1.1"/><path d="M8 4.4a3.6 3.6 0 0 1 0 7.2z" fill="#232629"/></svg>
<svg style="left:1060.8px;top:13.5px" width="17" height="17" viewBox="0 0 17 17"><path d="M15.83 7.17A7.65 7.65 0 1 0 8.9 16.15" fill="none" stroke="#232629" stroke-width="1.2"/><path d="M1.90 7.37A6.5 6.5 0 0 1 7.40 2.06L7.79 4.84A3.7 3.7 0 0 0 4.66 7.86Z" fill="#232629"/><path d="M9.77 7.65A1.7 1.7 0 1 0 7.45 9.97" fill="none" stroke="#232629" stroke-width="1"/><path d="M11 10.1h3.6v4.6l-1.6 1.6h-2z" fill="none" stroke="#232629" stroke-width="1.2"/></svg>
<svg style="left:1090.8px;top:13.5px" width="17" height="17" viewBox="0 0 17 17"><path d="M1 1.1h3.4v4.3h-3.4z" fill="none" stroke="#232629" stroke-width="1.2"/><path d="M1.9 2.2h.9v1.6h-.9z" fill="#232629"/><path d="M2.7 5.8v7.6c0 2 .9 2.6 2.6 2.6h6.8" fill="none" stroke="#232629" stroke-width="1"/><path d="M.6 8.5v5.7" stroke="#56585c" stroke-width="1.1"/><path d="M6.4 1h9.2v11.5" fill="none" stroke="#232629" stroke-width="1.1"/><path d="M4.5 11.7h11.6v1.5h-11.6z" fill="#232629"/><path d="M6.6 13.2h3.6v2.2h-3.6z" fill="#232629"/><path d="M4.5 15.3h7.6v1h-7.6z" fill="#232629"/></svg>
<svg style="left:1118.7px;top:17px" width="17" height="10" viewBox="0 0 17 10"><path d="M0.5 9.3l7.9-7.9 7.9 7.9" fill="none" stroke="#232629" stroke-width="1.2"/></svg>
<div class="t" style="left:1147.2px;top:8.08px;font-size:16.2px;">11:01 PM</div>
<div class="t" style="left:1162px;top:23.15px;font-size:13.4px;">1/7/26</div>
<svg style="left:1232px;top:14.2px" width="17" height="17" viewBox="0 0 17 17"><rect x="0.6" y="0.6" width="15" height="14.8" fill="none" stroke="#232629" stroke-width="1.2"/><path d="M1 12.8h14.4" stroke="#232629" stroke-width="1.1"/></svg>
</div>
</body></html>
